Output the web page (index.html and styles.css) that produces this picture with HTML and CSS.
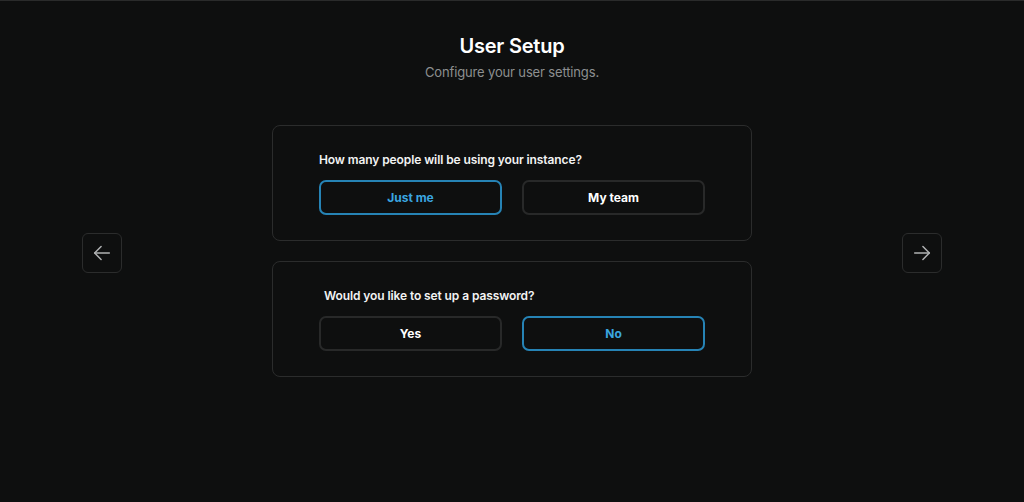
FILE: index.html
```html
<!DOCTYPE html>
<html lang="en">
<head>
  <meta charset="UTF-8">
  <title>User Setup</title>
  <link rel="stylesheet" href="styles.css">
</head>
<body>
  <div class="header">
    <h1>User Setup</h1>
    <p>Configure your user settings.</p>
  </div>

  <div class="stage">
    <button class="nav-btn" aria-label="Back">
      <svg width="22" height="22" viewBox="0 0 24 24" fill="none" stroke="currentColor" stroke-width="1.6" stroke-linecap="round" stroke-linejoin="round">
        <path d="M20 12H4"/>
        <path d="M11 5l-7 7 7 7"/>
      </svg>
    </button>

    <div class="cards">
      <div class="card">
        <div class="question">How many people will be using your instance?</div>
        <div class="options">
          <button class="option selected">Just me</button>
          <button class="option">My team</button>
        </div>
      </div>

      <div class="card">
        <div class="question shifted">Would you like to set up a password?</div>
        <div class="options">
          <button class="option">Yes</button>
          <button class="option selected">No</button>
        </div>
      </div>
    </div>

    <button class="nav-btn" aria-label="Next">
      <svg width="22" height="22" viewBox="0 0 24 24" fill="none" stroke="currentColor" stroke-width="1.6" stroke-linecap="round" stroke-linejoin="round">
        <path d="M4 12h16"/>
        <path d="M13 5l7 7-7 7"/>
      </svg>
    </button>
  </div>
</body>
</html>
```

FILE: styles.css
```css
body {
  font-family: 'Inter', 'Noto Sans', sans-serif;
  background: #0e0f0f;
  margin: 0;
  color: #fff;
  border-top: 1px solid #2a2b2b;
  height: 501px;
  overflow: hidden;
}

.header {
  text-align: center;
  padding-top: 33px;
}

h1 {
  margin: 0;
  font-size: 20px;
  font-weight: 600;
  letter-spacing: -0.2px;
  line-height: 24px;
}

.header p {
  margin: 5px 0 0;
  font-size: 13px;
  letter-spacing: -0.15px;
  color: #8d8f90;
  line-height: 18px;
}

.stage {
  display: flex;
  justify-content: center;
  align-items: center;
  gap: 150px;
  margin-top: 44px;
}

.nav-btn {
  width: 40px;
  height: 40px;
  margin-top: 3px;
  display: flex;
  align-items: center;
  justify-content: center;
  background: transparent;
  border: 1px solid #2b2c2c;
  border-radius: 6px;
  color: #b0b2b3;
  padding: 0;
  cursor: pointer;
}

.cards {
  display: flex;
  flex-direction: column;
  gap: 20px;
}

.card {
  width: 480px;
  height: 116px;
  box-sizing: border-box;
  border: 1px solid #2b2c2c;
  border-radius: 8px;
  padding: 26px 46px 0 46px;
}

.question {
  font-size: 12px;
  font-weight: 600;
  color: #f2f3f3;
  line-height: 16px;
  letter-spacing: -0.1px;
}

.question.shifted {
  padding-left: 5px;
}

.options {
  display: flex;
  gap: 20px;
  margin-top: 12px;
}

.option {
  flex: 1;
  height: 35px;
  background: transparent;
  border: 2px solid #282929;
  border-radius: 7px;
  color: #fff;
  font-family: inherit;
  font-size: 12px;
  font-weight: 700;
  cursor: pointer;
}

.option.selected {
  border-color: #2683b5;
  color: #3aa6e0;
}
```
